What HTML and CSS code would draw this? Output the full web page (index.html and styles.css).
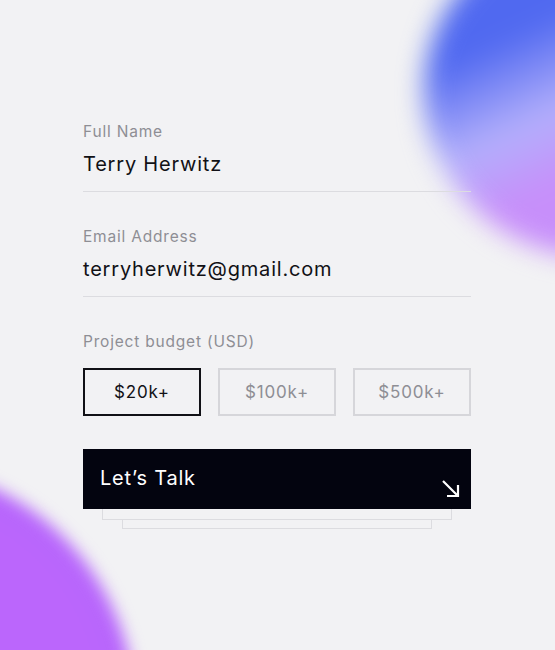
FILE: index.html
```html
<!DOCTYPE html>
<html>
<head>
<meta charset="utf-8">
<title>Contact</title>
<link rel="stylesheet" href="styles.css">
</head>
<body>
<div class="page">

<div class="blob blob-top"></div>
<div class="blob blob-bottom"></div>

<form class="contact">
	<div class="field">
		<div class="label">Full Name</div>
		<div class="value">Terry Herwitz</div>
	</div>
	<div class="field">
		<div class="label">Email Address</div>
		<div class="value">terryherwitz@gmail.com</div>
	</div>

	<div class="label">Project budget (USD)</div>
	<div class="budgets">
		<div class="budget selected">$20k+</div>
		<div class="budget">$100k+</div>
		<div class="budget">$500k+</div>
	</div>

	<div class="cta">
		<span>Let’s Talk</span>
		<svg class="arrow" width="20" height="20" viewBox="0 0 20 20">
			<path d="M2 2 L17 17 M6 17 H17 V6" fill="none" stroke="#fff" stroke-width="2.2"/>
		</svg>
	</div>
	<div class="layer layer1"></div>
	<div class="layer layer2"></div>
</form>

</div>
</body>
</html>
```

FILE: styles.css
```css
body {
	margin: 0px;
	background-color: #f2f2f4;
	font-family: "Inter", "Liberation Sans", sans-serif;
}
.page {
	position: relative;
	width: 555px;
	height: 650px;
	overflow: hidden;
}
.blob {
	position: absolute;
	border-radius: 50%;
}
.blob-top {
	left: 424px;
	top: -75px;
	width: 350px;
	height: 333px;
	background: linear-gradient(155deg, #5069f0 30%, #b3affb 50%, #c78ffa 65%);
	filter: blur(13px);
}
.blob-bottom {
	left: -355px;
	top: 465px;
	width: 490px;
	height: 490px;
	background: radial-gradient(circle, #bb66fc 60%, #a863f9 100%);
	filter: blur(8px);
}
.contact {
	position: relative;
	width: 388px;
	margin: 0px 0px 0px 83px;
	padding-top: 123px;
}
.label {
	font-size: 15.5px;
	line-height: 18px;
	letter-spacing: 0.8px;
	color: #8e8e94;
}
.value {
	font-size: 20px;
	line-height: 24px;
	letter-spacing: 0.8px;
	color: #111116;
	margin-top: 11px;
}
.field {
	padding-bottom: 15px;
	border-bottom: 1px solid #dcdce0;
	margin-bottom: 36px;
}
.budgets {
	display: flex;
	gap: 17px;
	margin-top: 17px;
}
.budget {
	flex: 1;
	height: 48px;
	box-sizing: border-box;
	border: 2px solid #d6d6da;
	display: flex;
	align-items: center;
	justify-content: center;
	font-size: 17px;
	letter-spacing: 0.8px;
	color: #8e8e94;
}
.budget.selected {
	border-color: #111116;
	color: #111116;
}
.cta {
	margin-top: 33px;
	height: 60px;
	box-sizing: border-box;
	background-color: #03040f;
	color: #ffffff;
	font-size: 20px;
	line-height: 24px;
	letter-spacing: 0.8px;
	padding: 17px 10px 10px 17px;
	display: flex;
	justify-content: space-between;
}
.arrow {
	align-self: flex-end;
}
.layer {
	box-sizing: border-box;
	border: 1px solid #dcdce0;
	border-top: none;
}
.layer1 {
	margin: 0px 19px;
	height: 11px;
}
.layer2 {
	margin: 0px 39px;
	height: 9px;
}
```
